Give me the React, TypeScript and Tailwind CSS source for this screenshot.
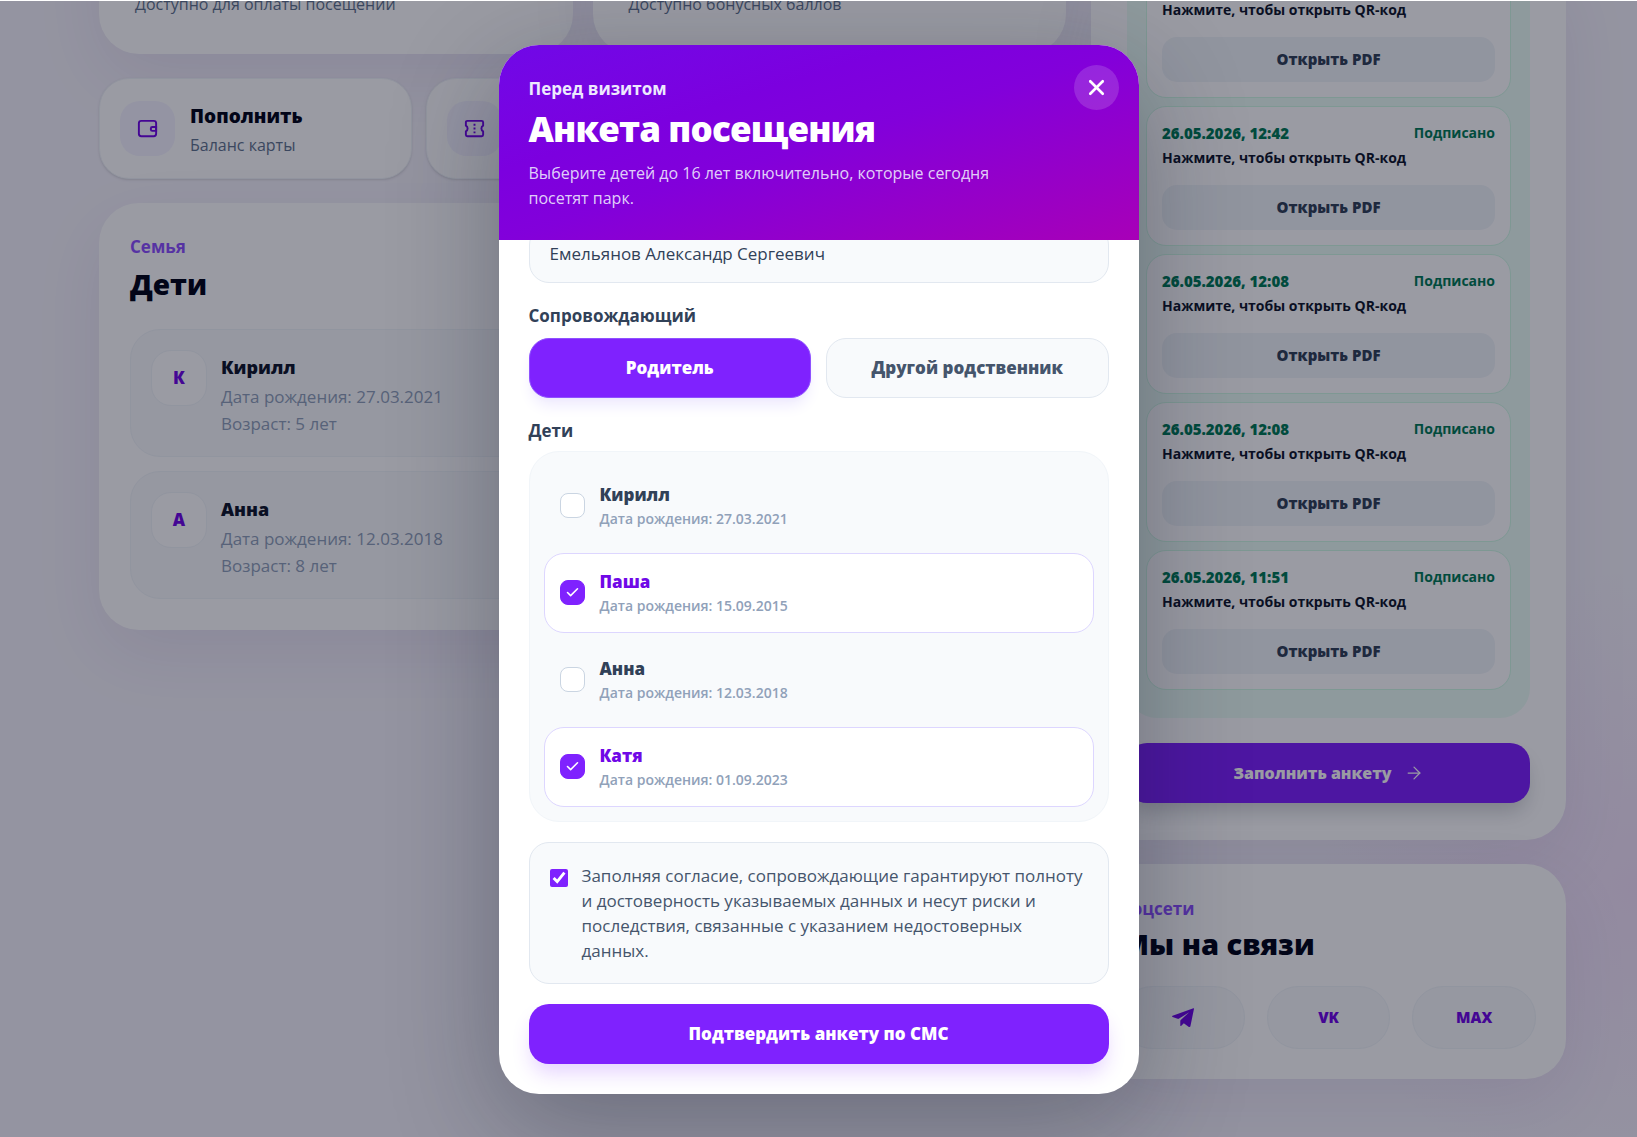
import { useState } from "react";
import type { ReactNode } from "react";
import { ArrowRight, Check, X } from "lucide-react";

const signed = ["", "26.05.2026, 12:42", "26.05.2026, 12:08", "26.05.2026, 12:08", "26.05.2026, 11:51"];

const family = [
  { name: "Кирилл", birth: "27.03.2021", age: "5 лет" },
  { name: "Анна", birth: "12.03.2018", age: "8 лет" },
];

const kids = [
  { name: "Кирилл", birth: "27.03.2021" },
  { name: "Паша", birth: "15.09.2015" },
  { name: "Анна", birth: "12.03.2018" },
  { name: "Катя", birth: "01.09.2023" },
];

const panel = "rounded-[40px] bg-white shadow-[0_24px_70px_rgba(46,16,101,0.08)]";
const social = "flex h-[63px] items-center justify-center rounded-[31px] border border-slate-100 bg-slate-50";

function WalletIcon() {
  return (
    <svg viewBox="0 0 24 24" width="23" height="23" fill="none" stroke="currentColor" strokeWidth="2">
      <rect x="3" y="4" width="18" height="16" rx="2.5" />
      <path d="M21 10.5h-4a1.5 1.5 0 0 0-1.500 1.500v1a1.500 1.500 0 0 0 1.500 1.500h4z" />
    </svg>
  );
}

function TicketIcon() {
  return (
    <svg viewBox="0 0 24 24" width="23" height="23" fill="none" stroke="currentColor" strokeWidth="2" strokeLinejoin="round">
      <path d="M4.500 4h15a1.500 1.500 0 0 1 1.500 1.500V9a3.400 3.400 0 0 0 0 6v3.500a1.500 1.500 0 0 1-1.500 1.500h-15a1.500 1.500 0 0 1-1.500-1.500V15a3.400 3.400 0 0 0 0-6V5.500A1.500 1.500 0 0 1 4.500 4z" />
      <path d="M12 7v2M12 11v2M12 15v2" />
    </svg>
  );
}

function PlaneIcon() {
  return (
    <svg viewBox="0 0 24 21" width="24" height="21" fill="currentColor">
      <path d="M22.400 1.200 1.600 8.800c-.7.300-.7 1.100 0 1.300l5 1.700c.5.200 1 .1 1.500-.2L18.200 5.200 9.700 13c-.3.300-.4.600-.4 1v4.400c0 .6.600.8 1 .4l2.500-2.600 5.100 3.700c.6.400 1.400.1 1.500-.6L23 1.800c.1-.5-.2-.8-.6-.6z" />
    </svg>
  );
}

function BalanceCard({ caption }: { caption: string }) {
  return (
    <section className={panel + " flex h-[200px] flex-1 items-end px-9 pb-[37px]"}>
      <p className="text-[16px] leading-[25px] text-slate-500">{caption}</p>
    </section>
  );
}

function QuickAction({ icon, children }: { icon: ReactNode; children?: ReactNode }) {
  return (
    <button className="flex h-[101px] items-center gap-[15px] rounded-[30px] border border-slate-100 bg-white px-5 text-left shadow-sm">
      <span className="flex size-[55px] shrink-0 items-center justify-center rounded-[20px] bg-violet-50 text-violet-700">{icon}</span>
      {children}
    </button>
  );
}

function LeftColumn() {
  return (
    <div className="flex min-w-0 flex-1 flex-col">
      <div className="-mt-[147px] flex gap-5">
        <BalanceCard caption="Доступно для оплаты посещений" />
        <BalanceCard caption="Доступно бонусных баллов" />
      </div>
      <div className="mt-6 grid grid-cols-3 gap-[14px]">
        <QuickAction icon={<WalletIcon />}>
          <span className="pt-0.5">
            <span className="block text-[19px] leading-[30px] font-extrabold text-slate-950">Пополнить</span>
            <span className="block text-[16px] leading-[28px] text-slate-500">Баланс карты</span>
          </span>
        </QuickAction>
        <QuickAction icon={<TicketIcon />} />
      </div>
      <section className={panel + " mt-6 p-[31px]"}>
        <p className="text-[17px] leading-[25px] font-bold text-violet-500">Семья</p>
        <h2 className="mt-[5px] text-[28px] leading-[40px] font-extrabold text-slate-950">Дети</h2>
        <div className="mt-[25px] flex flex-col gap-[14px]">
          {family.map((c) => (
            <article key={c.name} className="flex h-32 gap-[14px] rounded-[30px] border border-slate-100 bg-slate-50 p-5">
              <span className="flex size-14 items-center justify-center rounded-[20px] border border-slate-100 bg-white text-[17px] font-extrabold text-violet-700">
                {c.name[0]}
              </span>
              <div className="pt-[3px]">
                <h3 className="text-[18px] leading-[28px] font-extrabold text-slate-900">{c.name}</h3>
                <p className="mt-0.5 text-[17px] leading-[27px] font-medium text-slate-400">Дата рождения: {c.birth}</p>
                <p className="text-[17px] leading-[27px] font-medium text-slate-400">Возраст: {c.age}</p>
              </div>
            </article>
          ))}
        </div>
      </section>
    </div>
  );
}

function RightColumn() {
  return (
    <div className="flex w-[475px] shrink-0 flex-col gap-6">
      <section className={panel + " -mt-[43px] px-9 pb-[37px]"}>
        <div className="rounded-[30px] bg-emerald-50 px-[19px] pb-7">
          <div className="flex flex-col gap-2">
            {signed.map((date, i) => (
              <article key={i} className="h-[140px] rounded-[20px] border border-emerald-100 bg-white px-[15px] pt-4">
                <div className="flex h-5 justify-between leading-5 text-emerald-700">
                  <span className="text-[15px] font-extrabold">{date}</span>
                  {date && <span className="text-[14px] font-bold">Подписано</span>}
                </div>
                <p className="mt-[5px] text-[14px] leading-5 font-bold text-slate-900">Нажмите, чтобы открыть QR-код</p>
                <button className="mt-[17px] h-[45px] w-full rounded-[15px] bg-slate-100 text-[15px] font-extrabold text-slate-700">Открыть PDF</button>
              </article>
            ))}
          </div>
        </div>
        <button className="mt-[25px] flex h-[60px] w-full items-center justify-center gap-3 rounded-[20px] bg-violet-600 text-[16px] font-extrabold text-white shadow-[0_12px_20px_-4px_rgba(15,23,42,0.2)]">
          Заполнить анкету
          <ArrowRight size={20} strokeWidth={1.5} />
        </button>
      </section>
      <section className={panel + " px-[30px] pt-[32px] pb-[30px]"}>
        <p className="text-[17px] leading-[25px] font-bold text-violet-500">Соцсети</p>
        <h2 className="mt-[3px] text-[29px] leading-[40px] font-extrabold text-slate-950">Мы на связи</h2>
        <div className="mt-[22px] grid grid-cols-3 gap-[22px] text-[15px] font-extrabold text-violet-700">
          <a href="#telegram" aria-label="Telegram" className={social}>
            <PlaneIcon />
          </a>
          <a href="#vk" className={social}>VK</a>
          <a href="#max" className={social}>MAX</a>
        </div>
      </section>
    </div>
  );
}

function VisitDialog() {
  const [picked, setPicked] = useState(["Паша", "Катя"]);
  const [agreed, setAgreed] = useState(true);
  const toggle = (name: string) => setPicked((p) => (p.includes(name) ? p.filter((n) => n !== name) : [...p, name]));

  return (
    <div role="dialog" aria-labelledby="visit-title" className="flex h-[calc(100%-87px)] w-full max-w-[640px] flex-col overflow-hidden rounded-[40px] bg-white shadow-[0_30px_110px_rgba(15,23,42,0.32)]">
      <header className="relative shrink-0 bg-gradient-to-br from-violet-700 via-purple-700 to-fuchsia-700 px-[30px] pt-[31px] pb-[29px] text-white">
        <p className="text-[17px] leading-[25px] font-bold text-violet-100">Перед визитом</p>
        <h1 id="visit-title" className="mt-[5px] text-[35px] leading-[45px] font-extrabold tracking-tight">Анкета посещения</h1>
        <p className="mt-[10px] max-w-[500px] text-[16px] leading-[25px] text-violet-100/90">
          Выберите детей до 16 лет включительно, которые сегодня посетят парк.
        </p>
        <button aria-label="Закрыть" className="absolute top-5 right-5 flex size-[45px] items-center justify-center rounded-full bg-white/15">
          <X size={25} strokeWidth={2.5} />
        </button>
      </header>
      <div className="flex min-h-0 flex-1 flex-col justify-end overflow-hidden px-[30px] pb-[30px]">
        <input aria-label="Взрослый" readOnly value="Емельянов Александр Сергеевич" className="h-[58px] w-full shrink-0 rounded-[20px] border border-slate-200 bg-slate-50 px-5 text-[17px] font-medium text-slate-700" />
        <p className="mt-5 shrink-0 text-[17px] leading-[25px] font-bold text-slate-700">Сопровождающий</p>
        <div className="mt-[10px] grid shrink-0 grid-cols-2 gap-[15px]">
          <button className="h-[60px] rounded-[20px] border border-violet-500 bg-violet-600 text-[17px] font-extrabold text-white shadow-lg shadow-violet-100">Родитель</button>
          <button className="h-[60px] rounded-[20px] border border-slate-200 bg-slate-50 text-[17px] font-extrabold text-slate-600">Другой родственник</button>
        </div>
        <p className="mt-5 shrink-0 text-[17px] leading-[25px] font-bold text-slate-700">Дети</p>
        <div className="mt-2 flex shrink-0 flex-col gap-[7px] rounded-[30px] border border-slate-100 bg-slate-50 p-[14px]">
          {kids.map((k) => {
            const on = picked.includes(k.name);
            return (
              <label key={k.name} className={"flex h-20 items-center gap-[15px] rounded-[20px] border px-[15px] " + (on ? "border-violet-200 bg-white" : "border-transparent")}>
                <span className="relative flex size-[25px]">
                  <input
                    type="checkbox"
                    checked={on}
                    onChange={() => toggle(k.name)}
                    className="size-full appearance-none rounded-[8px] border border-slate-300 bg-white checked:border-violet-600 checked:bg-violet-600"
                  />
                  {on && <Check size={15} strokeWidth={2.5} className="pointer-events-none absolute inset-0 m-auto text-white" />}
                </span>
                <span className="pt-px">
                  <span className={"block text-[17px] leading-[25px] font-extrabold " + (on ? "text-violet-700" : "text-slate-700")}>{k.name}</span>
                  <span className="block text-[14px] leading-[23px] font-semibold text-slate-400">Дата рождения: {k.birth}</span>
                </span>
              </label>
            );
          })}
        </div>
        <label className="mt-5 flex shrink-0 items-start gap-[14px] rounded-[20px] border border-slate-200 bg-slate-50 p-5">
          <input type="checkbox" checked={agreed} onChange={() => setAgreed(!agreed)} className="mt-[6px] size-[18px] shrink-0 accent-violet-600" />
          <span className="text-[17px] leading-[25px] font-medium text-slate-600">
            Заполняя согласие, сопровождающие гарантируют полноту и достоверность указываемых данных и несут риски и последствия, связанные с указанием недостоверных данных.
          </span>
        </label>
        <button className="mt-5 h-[60px] shrink-0 rounded-[20px] bg-violet-600 text-[17px] font-extrabold text-white shadow-[0_12px_20px_-3px_rgba(127,34,254,0.2)]">Подтвердить анкету по СМС</button>
      </div>
    </div>
  );
}

export default function App() {
  return (
    <div className="relative h-screen overflow-hidden border-t border-white bg-[#f6f4fc] bg-[radial-gradient(circle_at_100%_78%,rgba(217,70,239,0.1),transparent_320px)] font-['Open_Sans',sans-serif]">
      <main className="flex items-start gap-[25px] pr-[71px] pl-[99px]">
        <LeftColumn />
        <RightColumn />
      </main>
      <div className="absolute inset-0 flex items-center justify-center bg-slate-950/40">
        <VisitDialog />
      </div>
    </div>
  );
}
